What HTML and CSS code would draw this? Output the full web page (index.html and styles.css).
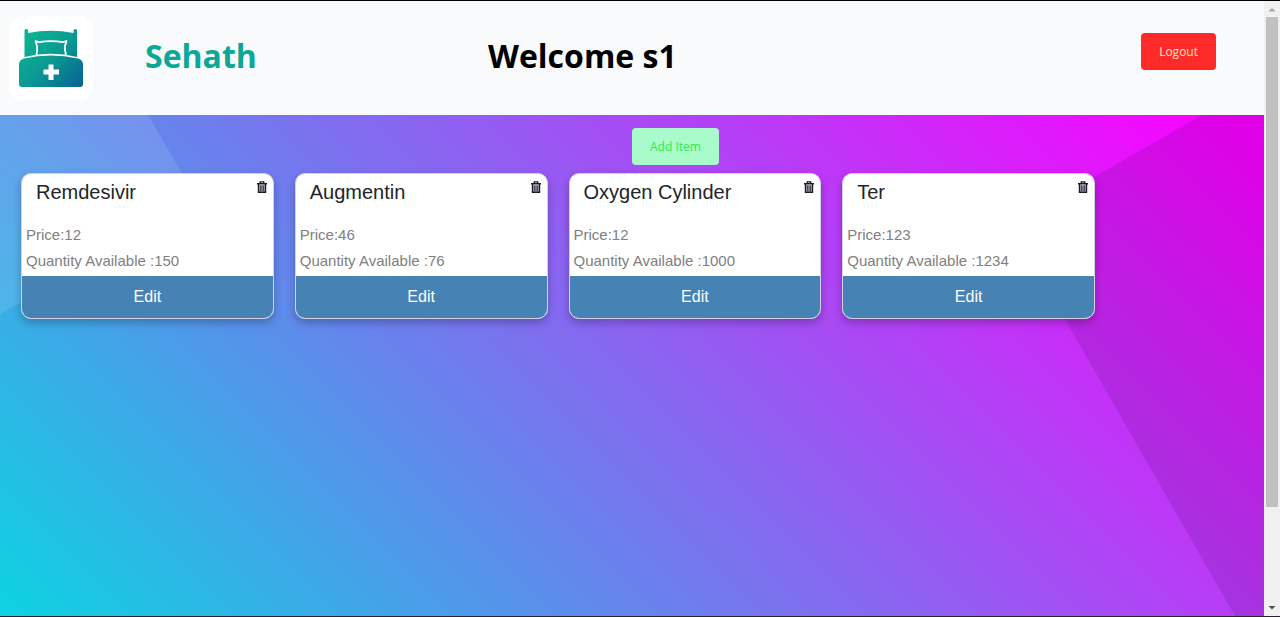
FILE: index.html
```html
<!DOCTYPE html>
<html lang="en">
<head>
<meta charset="utf-8">
<meta name="viewport" content="width=device-width, initial-scale=1">
<title>Sehath</title>
<link rel="stylesheet" href="styles.css">
</head>
<body>
<div class="page">
  <header class="header">
    <svg class="logo" viewBox="0 0 84 84" aria-hidden="true">
      <defs>
        <linearGradient id="bed" gradientUnits="userSpaceOnUse" x1="14" y1="18" x2="72" y2="76">
          <stop offset="0" stop-color="#0bb592"/>
          <stop offset="0.45" stop-color="#0b9b92"/>
          <stop offset="1" stop-color="#075f93"/>
        </linearGradient>
      </defs>
      <rect width="84" height="84" rx="13" fill="#fff"/>
      <path fill="url(#bed)" d="M15.500 14.500q0-1.500 1.800-1.500t1.800 1.500v2.500Q42 12.500 64.500 17v-2.500q0-1.500 1.800-1.500t1.800 1.500V41Q42 34.500 15.500 41z"/>
      <path fill="none" stroke="#fff" stroke-width="1.800" stroke-linejoin="round" d="M27.500 39q1-5 .5-9l-1.500-5 3.500 1.200q12-2 24 0l3.500-1.200L56 30q-.5 4 1 9"/>
      <path fill="url(#bed)" d="M10 48q.5-4.500 5-5.500Q42 36.500 69 42.500q4.500 1 5 5.500v20q0 3-3 3H13q-3 0-3-3z"/>
      <path fill="#fff" d="M39.500 48.500h5v5h5.500v5h-5.500v5.500h-5v-5.500h-5v-5h5z"/>
    </svg>
    <h1 class="brand">Sehath</h1>
    <h1 class="welcome">Welcome s1</h1>
    <button class="button logout" type="button">Logout</button>
  </header>
  <main class="main">
    <svg class="backdrop" viewBox="0 0 1264 501" preserveAspectRatio="none" aria-hidden="true">
      <path fill="#fff" fill-opacity=".11" d="M0 0h148l51 88L0 199z"/>
      <path fill="#18003c" fill-opacity=".12" d="M1202 0h62v501h-29L1011 110z"/>
    </svg>
    <button class="button add" type="button">Add Item</button>
    <div class="cards">
      <article class="card">
        <div class="card-head"><h2 class="name">Remdesivir</h2><button class="trash" type="button" aria-label="Delete Remdesivir"><svg viewBox="0 0 10 12"><use href="#bin"/></svg></button></div>
        <p class="info">Price:12</p>
        <p class="info">Quantity Available :150</p>
        <button class="edit" type="button">Edit</button>
      </article>
      <article class="card">
        <div class="card-head"><h2 class="name">Augmentin</h2><button class="trash" type="button" aria-label="Delete Augmentin"><svg viewBox="0 0 10 12"><use href="#bin"/></svg></button></div>
        <p class="info">Price:46</p>
        <p class="info">Quantity Available :76</p>
        <button class="edit" type="button">Edit</button>
      </article>
      <article class="card">
        <div class="card-head"><h2 class="name">Oxygen Cylinder</h2><button class="trash" type="button" aria-label="Delete Oxygen Cylinder"><svg viewBox="0 0 10 12"><use href="#bin"/></svg></button></div>
        <p class="info">Price:12</p>
        <p class="info">Quantity Available :1000</p>
        <button class="edit" type="button">Edit</button>
      </article>
      <article class="card">
        <div class="card-head"><h2 class="name">Ter</h2><button class="trash" type="button" aria-label="Delete Ter"><svg viewBox="0 0 10 12"><use href="#bin"/></svg></button></div>
        <p class="info">Price:123</p>
        <p class="info">Quantity Available :1234</p>
        <button class="edit" type="button">Edit</button>
      </article>
    </div>
  </main>
</div>
<div class="scrollbar" aria-hidden="true">
  <svg class="arrow" viewBox="0 0 16 16"><path fill="#a3a3a3" d="M4.500 10.500h7L8 7z"/></svg>
  <div class="track"><div class="thumb"></div></div>
  <svg class="arrow" viewBox="0 0 16 16"><path fill="#505050" d="M4.500 6h7L8 9.500z"/></svg>
</div>
<svg class="symbols" aria-hidden="true">
  <symbol id="bin" viewBox="0 0 10 12">
    <path fill="#b9a9b9" d="M2 4h6v7H2z"/>
    <path fill="none" stroke="#1d1a26" stroke-width="1.400" d="M3.300 2.200V.9h3.400v1.300M0 2.700h10M1.500 3v8.200h7V3"/>
    <path fill="none" stroke="#1d1a26" stroke-width=".7" d="M3.500 4.500v5.500M5 4.500v5.500M6.500 4.500v5.500"/>
  </symbol>
</svg>
</body>
</html>
```
FILE: styles.css
```css
* { box-sizing: border-box; }

body {
  margin: 0;
  min-height: 100vh;
  display: flex;
  border-top: 1px solid #000;
  border-bottom: 1px solid #2a2230;
  font-family: "Liberation Sans", Arial, sans-serif;
  color: #212529;
}

h1, h2, p { margin: 0; }

button {
  font: inherit;
  border: 0;
  cursor: pointer;
}

.page {
  flex: 1;
  display: flex;
  flex-direction: column;
}

.header {
  display: flex;
  align-items: center;
  padding: 15px 48px 15px 9px;
  background: #f8fafb;
}

.logo {
  width: 84px;
  height: 84px;
}

.brand,
.welcome {
  margin-bottom: 5px;
  font-family: "Open Sans", "Noto Sans", sans-serif;
  font-size: 32px;
  line-height: 40px;
  font-weight: 700;
}

.brand {
  margin-left: 52px;
  width: 343px;
  color: #0ba797;
}

.welcome { color: #000; }

.button {
  padding: 0 18px;
  border-radius: 4px;
  font-family: "Open Sans", "Noto Sans", sans-serif;
  font-size: 12px;
  line-height: 37px;
}

.logout {
  margin-left: auto;
  margin-bottom: 13px;
  background: #ff2b2b;
  color: #fbe3b4;
}

.main {
  position: relative;
  flex: 1;
  display: flex;
  flex-direction: column;
  padding-top: 13px;
  background: linear-gradient(45deg, #0dd3e1, #fc00ff 98%);
}

.backdrop {
  position: absolute;
  inset: 0;
  width: 100%;
  height: 100%;
}

.add {
  position: relative;
  align-self: flex-start;
  margin-left: 50%;
  background: #a9fbcb;
  color: #2fea4b;
}

.cards {
  position: relative;
  display: grid;
  grid-template-columns: repeat(4, 1fr);
  gap: 21px;
  padding: 8px 169px 20px 21px;
}

.card {
  display: flex;
  flex-direction: column;
  overflow: hidden;
  border: 1px solid #d3d0e8;
  border-radius: 10px;
  background: #fff;
  box-shadow: 0 4px 8px rgba(0, 0, 0, 0.25);
}

.card-head {
  display: flex;
  justify-content: space-between;
  align-items: flex-start;
  padding: 5px 6px 17px 14px;
}

.name {
  font-size: 20px;
  line-height: 26px;
  font-weight: 400;
}

.trash {
  padding: 2px 0 0;
  background: none;
  line-height: 0;
}

.trash svg {
  width: 10px;
  height: 12px;
}

.info {
  padding-left: 4px;
  font-size: 15px;
  line-height: 26px;
  color: #808080;
}

.edit {
  margin-top: 2px;
  background: #4682b4;
  color: #fff;
  font-size: 16px;
  line-height: 42px;
  padding: 0;
}

.scrollbar {
  width: 16px;
  display: flex;
  flex-direction: column;
  background: #f1f1f1;
}

.arrow {
  width: 16px;
  height: 16px;
}

.track {
  flex: 1;
  padding: 0 2px;
}

.thumb {
  height: 84%;
  background: #c1c1c1;
}

.symbols {
  position: absolute;
  width: 0;
  height: 0;
}
```
